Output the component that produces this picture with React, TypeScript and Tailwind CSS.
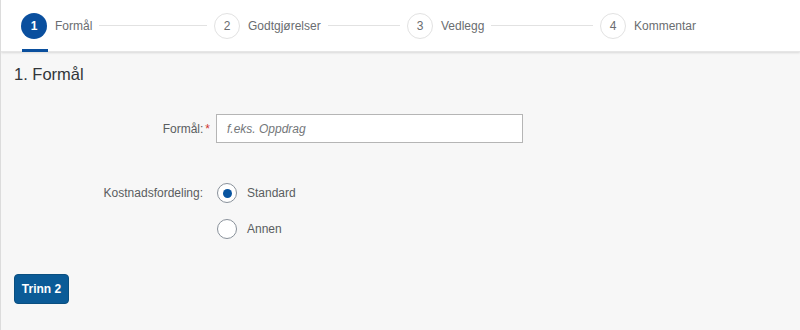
import React, { useState } from 'react'

const steps = ['Formål', 'Godtgjørelser', 'Vedlegg', 'Kommentar']

function StepBar() {
  return (
    <div className="relative z-10 flex h-[52px] bg-white pl-[20px] shadow-[0_1px_2px_rgba(0,0,0,0.12)] border-b border-[#e6e6e6]">
      {steps.map((label, i) => {
        const active = i === 0
        const last = i === steps.length - 1
        return (
          <div key={label} className={last ? 'flex flex-1 items-center' : 'flex w-[193px] items-center'}>
            {/* Circle with underline for the current step */}
            <div className="relative flex h-full items-center">
              <div
                className={
                  active
                    ? 'flex h-[26px] w-[26px] items-center justify-center rounded-full bg-[#0a4f9e] text-[12px] font-bold text-white'
                    : 'flex h-[26px] w-[26px] items-center justify-center rounded-full border border-[#e2e2e2] bg-white text-[12px] text-[#6a6d70]'
                }
              >
                {i + 1}
              </div>
              {active && <div className="absolute bottom-[-1px] left-[1px] right-[-1px] h-[3px] bg-[#0a4f9e]" />}
            </div>
            <span className="ml-[8px] text-[12px] text-[#6a6d70]">{label}</span>
            {!last && <div className="mx-[7px] h-px flex-1 bg-[#e2e2e2]" />}
          </div>
        )
      })}
    </div>
  )
}

function Radio({ checked, label, onClick }: { checked: boolean; label: string; onClick: () => void }) {
  return (
    <button type="button" onClick={onClick} className="flex h-[36px] items-center">
      <span className="flex h-[20px] w-[20px] items-center justify-center rounded-full border border-[#89919a] bg-white">
        {checked && <span className="h-[9px] w-[9px] rounded-full bg-[#0854a0]" />}
      </span>
      <span className="ml-[10px] text-[12px] text-[#5a5d60]">{label}</span>
    </button>
  )
}

export default function App() {
  const [purpose, setPurpose] = useState('')
  const [split, setSplit] = useState('standard')

  return (
    <div
      className="flex h-[330px] w-full flex-col overflow-hidden border-l border-[#dcdcdc] bg-[#f7f7f7]"
      style={{ fontFamily: '"Liberation Sans", Arial, sans-serif' }}
    >
      <StepBar />

      <div className="flex flex-col px-[13px]">
        <h1 className="mt-[12px] text-[16.5px] leading-[20px] text-[#32363a]">1. Formål</h1>

        {/* Form */}
        <div className="mt-[30px] flex flex-col">
          <div className="flex items-center">
            <label className="w-[202px] pr-[6px] text-right text-[12px] text-[#5a5d60]">
              Formål:<span className="ml-[2px] text-[#d0352f]">*</span>
            </label>
            <input
              value={purpose}
              onChange={(e) => setPurpose(e.target.value)}
              placeholder="f.eks. Oppdrag"
              className="h-[29px] w-[307px] border border-[#b5b5b5] bg-white px-[10px] text-[12px] text-[#32363a] placeholder:italic placeholder:text-[#74777a] focus:outline-none"
            />
          </div>

          <div className="mt-[32px] flex">
            <div className="flex h-[36px] w-[203px] items-center justify-end pr-[14px] text-[12px] text-[#5a5d60]">
              Kostnadsfordeling:
            </div>
            <div className="flex flex-col">
              <Radio checked={split === 'standard'} label="Standard" onClick={() => setSplit('standard')} />
              <Radio checked={split === 'annen'} label="Annen" onClick={() => setSplit('annen')} />
            </div>
          </div>
        </div>

        <div className="mt-[27px]">
          <button
            type="button"
            className="h-[30px] w-[55px] rounded-[4px] border border-[#0a4f80] bg-[#0b5b97] text-[12px] font-bold text-white"
          >
            Trinn 2
          </button>
        </div>
      </div>
    </div>
  )
}
